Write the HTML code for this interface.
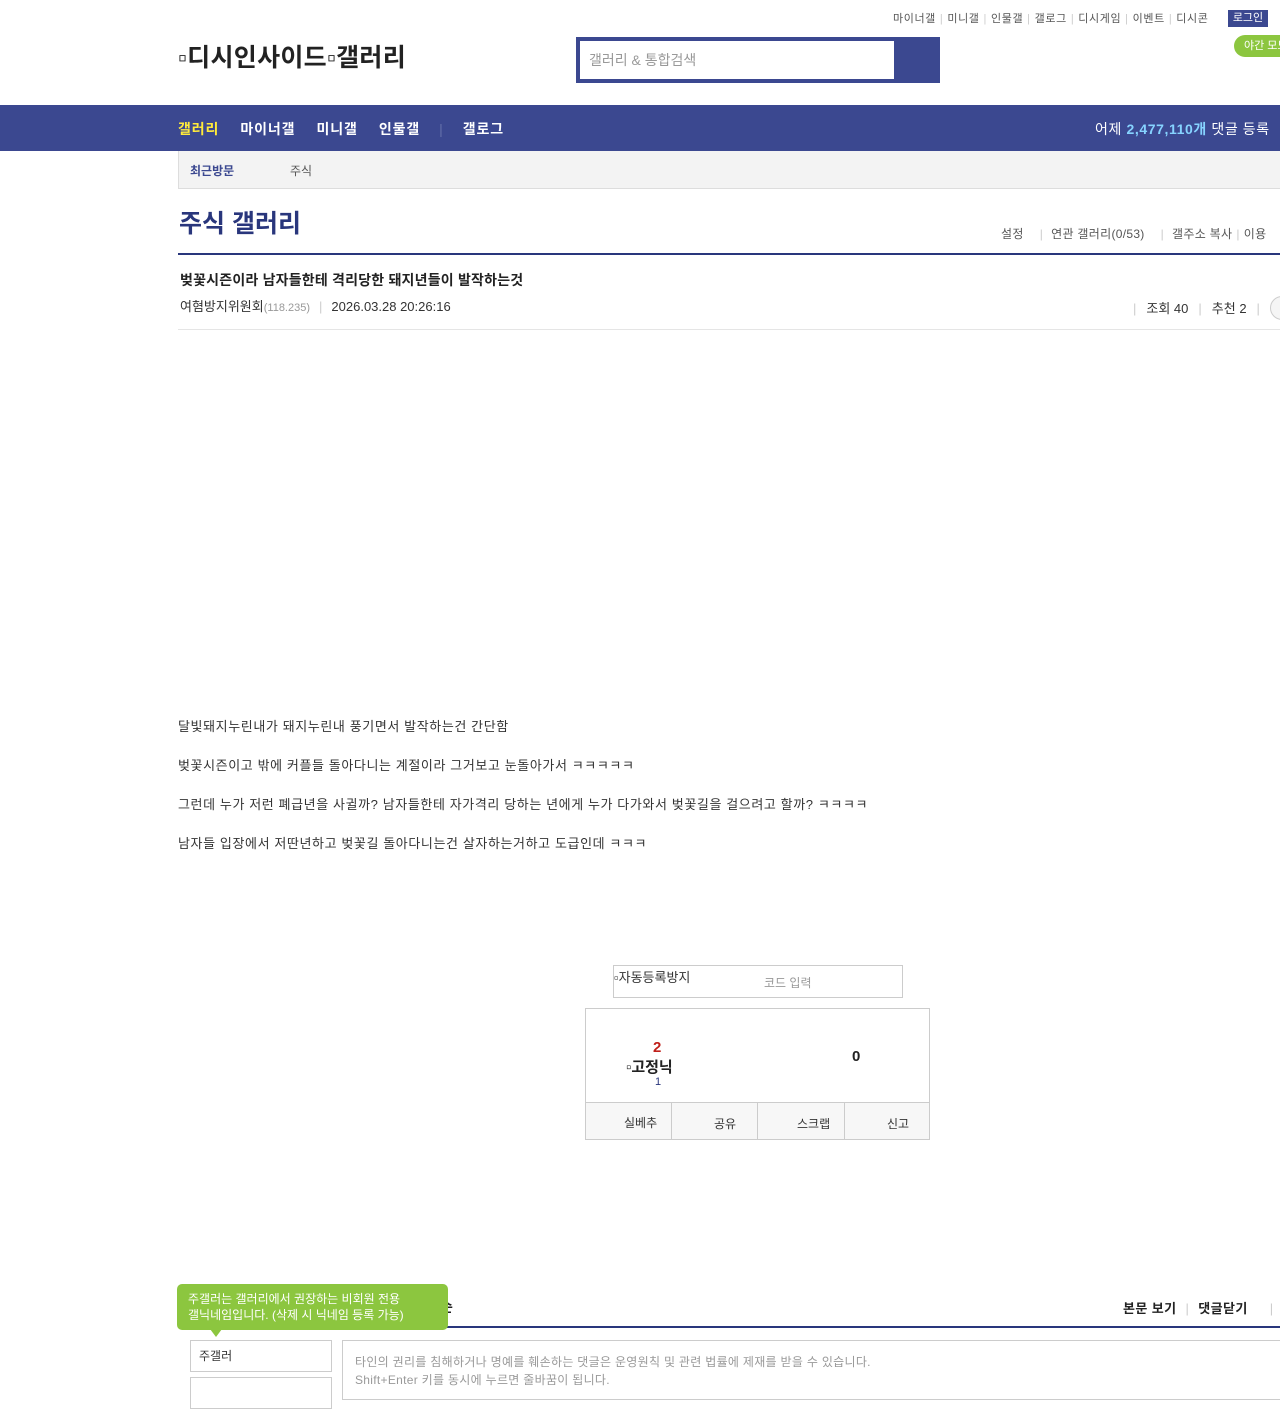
<!DOCTYPE html>
<html><head><meta charset="utf-8">
<style>
*{margin:0;padding:0;box-sizing:border-box}
body{width:1280px;height:1389px;overflow:hidden;background:#fff;position:relative;font-family:"Liberation Sans","Noto Sans CJK KR",sans-serif;color:#333}
.a{position:absolute;white-space:nowrap}
.sep{color:#ccc;margin:0 4px}
</style></head><body>
<div class="a" style="top:10px;left:893px;font-size:11px;color:#555;letter-spacing:0.6px">마이너갤<span class="sep">|</span>미니갤<span class="sep">|</span>인물갤<span class="sep">|</span>갤로그<span class="sep">|</span>디시게임<span class="sep">|</span>이벤트<span class="sep">|</span>디시콘</div>
<div class="a" style="top:10px;left:1228px;width:40px;height:17px;background:#3b4890;color:#fff;font-size:11px;text-align:center;line-height:17px">로그인</div>
<div class="a" style="top:35px;left:1234px;width:60px;height:22px;background:#8cc63f;border-radius:11px;color:#fff;font-size:11px;line-height:22px;padding-left:10px">야간 모드</div>
<div class="a" style="top:38px;left:178px;font-size:25px;font-weight:bold;color:#222;letter-spacing:0.3px">▫디시인사이드▫갤러리</div>
<div class="a" style="top:37px;left:576px;width:364px;height:46px;background:#3b4890"></div>
<div class="a" style="top:41px;left:580px;width:314px;height:38px;background:#fff;font-size:14px;color:#999;line-height:38px;padding-left:9px">갤러리 &amp; 통합검색</div>
<div class="a" style="top:105px;left:0;width:1280px;height:46px;background:#3b4890"></div>
<div class="a" style="top:119px;left:178px;font-size:14px;font-weight:bold;color:#fff;letter-spacing:0.9px"><span style="color:#ffeb3b">갤러리</span><span style="margin-left:21px">마이너갤</span><span style="margin-left:21px">미니갤</span><span style="margin-left:21px">인물갤</span><span style="margin:0 19px;color:#6470aa;font-weight:normal">|</span>갤로그</div>
<div class="a" style="top:119px;left:1095px;font-size:14px;color:#fff;letter-spacing:0.6px">어제 <b style="color:#86d3ff">2,477,110개</b> 댓글 등록</div>
<div class="a" style="top:151px;left:178px;width:1102px;height:38px;background:#f3f3f3;border:1px solid #ddd;border-top:0;border-right:0"></div>
<div class="a" style="top:162px;left:190px;font-size:12px;font-weight:bold;color:#3b4890">최근방문</div>
<div class="a" style="top:162px;left:290px;font-size:12px;color:#555">주식</div>
<div class="a" style="top:204px;left:179px;font-size:25px;font-weight:bold;color:#29367c">주식 갤러리</div>
<div class="a" style="top:225px;left:1001px;font-size:12px;color:#555;letter-spacing:0.3px">설정<span class="sep" style="margin:0 8px 0 16px">|</span>연관 갤러리(0/53)<span class="sep" style="margin:0 8px 0 16px">|</span>갤주소 복사<span class="sep">|</span>이용</div>
<div class="a" style="top:253px;left:178px;width:1102px;height:2px;background:#29367c"></div>
<div class="a" style="top:270px;left:180px;font-size:14px;font-weight:bold;color:#222;letter-spacing:0.2px">벚꽃시즌이라 남자들한테 격리당한 돼지년들이 발작하는것</div>
<div class="a" style="top:296px;left:180px;font-size:13px;color:#333">여혐방지위원회<span style="font-size:11px;color:#999">(118.235)</span><span class="sep" style="margin:0 9px">|</span>2026.03.28 20:26:16</div>
<div class="a" style="top:298px;left:1133px;font-size:13px;color:#333"><span class="sep" style="margin:0 10px 0 0">|</span>조회 40<span class="sep" style="margin:0 10px">|</span>추천 2<span class="sep" style="margin:0 10px">|</span></div>
<div class="a" style="top:296px;left:1270px;width:24px;height:24px;border:1px solid #ccc;border-radius:12px;background:#f5f5f5"></div>
<div class="a" style="top:329px;left:178px;width:1102px;height:1px;background:#e5e5e5"></div>
<div class="a" style="top:707px;left:178px;font-size:13px;color:#333;line-height:39px;letter-spacing:0.6px">달빛돼지누린내가 돼지누린내 풍기면서 발작하는건 간단함<br>벚꽃시즌이고 밖에 커플들 돌아다니는 계절이라 그거보고 눈돌아가서 ㅋㅋㅋㅋㅋ<br>그런데 누가 저런 폐급년을 사귈까? 남자들한테 자가격리 당하는 년에게 누가 다가와서 벚꽃길을 걸으려고 할까? ㅋㅋㅋㅋ<br>남자들 입장에서 저딴년하고 벚꽃길 돌아다니는건 살자하는거하고 도급인데 ㅋㅋㅋ</div>
<div class="a" style="top:965px;left:613px;width:290px;height:33px;border:1px solid #ccc"></div>
<div class="a" style="top:967px;left:614px;font-size:13px;color:#333">▫자동등록방지</div>
<div class="a" style="top:974px;left:764px;font-size:12px;color:#999">코드 입력</div>
<div class="a" style="top:1008px;left:585px;width:345px;height:132px;border:1px solid #ccc"></div>
<div class="a" style="top:1102px;left:586px;width:343px;height:37px;background:#f7f7f7;border-top:1px solid #ccc"></div>
<div class="a" style="top:1102px;left:671px;width:1px;height:37px;background:#ccc"></div>
<div class="a" style="top:1102px;left:757px;width:1px;height:37px;background:#ccc"></div>
<div class="a" style="top:1102px;left:844px;width:1px;height:37px;background:#ccc"></div>
<div class="a" style="top:1114px;left:624px;font-size:12px;color:#333">실베추</div>
<div class="a" style="top:1115px;left:714px;font-size:12px;color:#333">공유</div>
<div class="a" style="top:1115px;left:797px;font-size:12px;color:#333">스크랩</div>
<div class="a" style="top:1115px;left:887px;font-size:12px;color:#333">신고</div>
<div class="a" style="top:1039px;left:653px;font-size:15px;font-weight:bold;color:#c0201a">2</div>
<div class="a" style="top:1056px;left:626px;font-size:15px;font-weight:bold;color:#222">▫고정닉</div>
<div class="a" style="top:1076px;left:655px;font-size:11px;color:#29367c">1</div>
<div class="a" style="top:1048px;left:852px;font-size:15px;font-weight:bold;color:#222">0</div>
<div class="a" style="top:1297px;left:440px;font-size:14px;font-weight:bold;color:#222">순</div>
<div class="a" style="top:1298px;left:1123px;font-size:13px;font-weight:bold;color:#222;letter-spacing:0.4px">본문 보기<span class="sep" style="margin:0 9px;font-weight:normal">|</span>댓글닫기<span class="sep" style="margin:0 0 0 22px;font-weight:normal">|</span></div>
<div class="a" style="top:1326px;left:178px;width:1102px;height:2px;background:#29367c"></div>
<div class="a" style="top:1284px;left:177px;width:271px;height:46px;background:#8cc63f;border-radius:5px;color:#fff;font-size:12px;line-height:16px;padding:7px 11px">주갤러는 갤러리에서 권장하는 비회원 전용<br>갤닉네임입니다. (삭제 시 닉네임 등록 가능)</div>
<div class="a" style="top:1329px;left:210px;width:0;height:0;border-left:6px solid transparent;border-right:6px solid transparent;border-top:8px solid #8cc63f"></div>
<div class="a" style="top:1340px;left:190px;width:142px;height:32px;border:1px solid #ccc;font-size:12px;line-height:30px;padding-left:8px;color:#333;background:#fff">주갤러</div>
<div class="a" style="top:1377px;left:190px;width:142px;height:32px;border:1px solid #ccc"></div>
<div class="a" style="top:1340px;left:342px;width:950px;height:60px;border:1px solid #ccc;background:#fff"></div>
<div class="a" style="top:1353px;left:355px;font-size:12px;color:#999;line-height:18px;letter-spacing:0.3px">타인의 권리를 침해하거나 명예를 훼손하는 댓글은 운영원칙 및 관련 법률에 제재를 받을 수 있습니다.<br>Shift+Enter 키를 동시에 누르면 줄바꿈이 됩니다.</div>
</body></html>
